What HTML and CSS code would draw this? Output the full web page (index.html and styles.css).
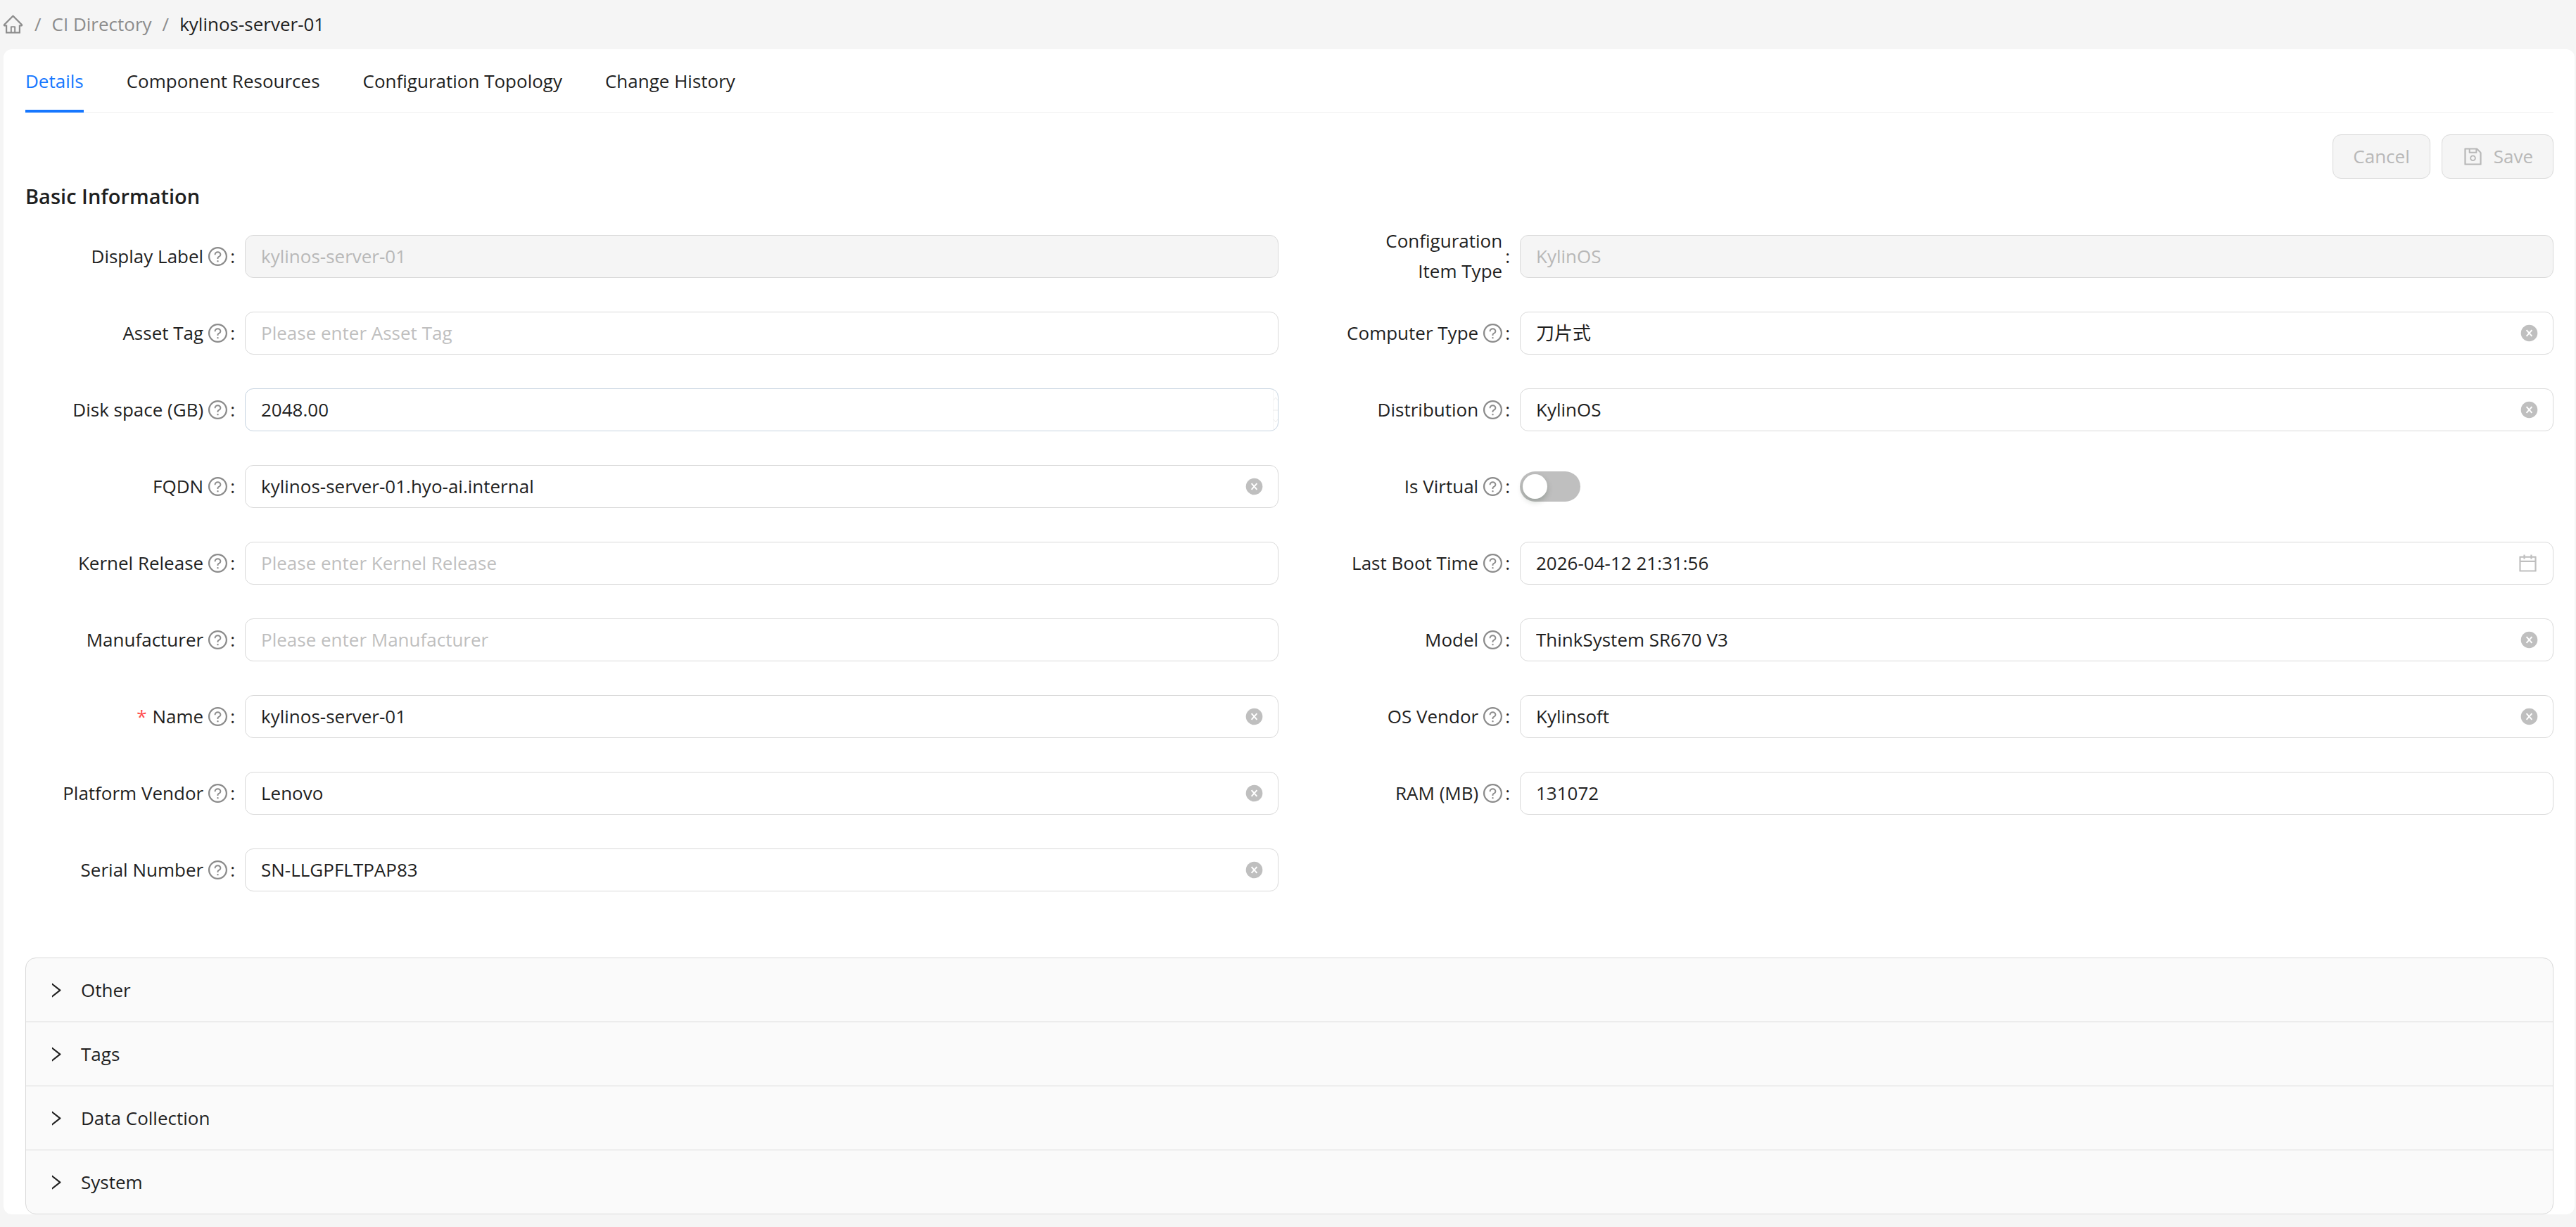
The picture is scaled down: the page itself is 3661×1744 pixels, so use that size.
FILE: index.html
```html
<!DOCTYPE html>
<html lang="en">
    <head>
        <meta charset="utf-8">
        <title>kylinos-server-01</title>
        <link rel="stylesheet" href="styles.css">
    </head>
    <body>
        <svg class="sprite" aria-hidden="true">
            <symbol id="i-home" viewBox="0 0 1024 1024"><path d="M946.5 505L560.1 118.8l-25.9-25.9a31.5 31.5 0 00-44.4 0L77.5 505a63.9 63.9 0 00-18.8 46c.4 35.2 29.7 63.3 64.9 63.3h42.5V940h691.8V614.3h43.4c17.1 0 33.2-6.7 45.3-18.8a63.6 63.6 0 0018.7-45.3c0-17-6.7-33.1-18.8-45.2zM568 868H456V664h112v204zm217.9-325.7V868H632V640c0-22.1-17.9-40-40-40H432c-22.1 0-40 17.9-40 40v228H238.1V542.3h-96l370-369.7 23.1 23.1L882 542.3h-96.1z"/></symbol>
            <symbol id="i-help" viewBox="0 0 1024 1024"><path d="M512 64C264.6 64 64 264.6 64 512s200.6 448 448 448 448-200.6 448-448S759.4 64 512 64zm0 820c-205.4 0-372-166.6-372-372s166.6-372 372-372 372 166.6 372 372-166.6 372-372 372z"/><path d="M623.6 316.7C593.6 290.4 554 276 512 276s-81.6 14.5-111.6 40.7C369.2 344 352 380.7 352 420v7.6c0 4.4 3.6 8 8 8h48c4.4 0 8-3.6 8-8V420c0-44.1 43.1-80 96-80s96 35.9 96 80c0 31.1-22 59.6-56.1 72.7-21.2 8.1-39.2 22.3-52.1 40.9-13.1 19-19.9 41.8-19.9 64.9V620c0 4.4 3.6 8 8 8h48c4.4 0 8-3.6 8-8v-22.7a48.3 48.3 0 0130.9-44.8c59-22.7 97.1-74.7 97.1-132.5.1-39.3-17.1-76-48.3-103.3zM472 732a40 40 0 1080 0 40 40 0 10-80 0z"/></symbol>
            <symbol id="i-right" viewBox="0 0 1024 1024"><path d="M765.7 486.8L314.9 134.7A7.97 7.97 0 00302 141v77.3c0 4.9 2.3 9.6 6.1 12.6l360 281.1-360 281.1c-3.9 3-6.1 7.7-6.1 12.6V883c0 6.7 7.7 10.4 12.9 6.3l450.8-352.1a31.96 31.96 0 000-50.4z"/></symbol>
            <symbol id="i-save" viewBox="0 0 1024 1024"><path d="M893.3 293.3L730.7 130.7c-7.5-7.5-16.7-13-26.7-16V112H144c-17.7 0-32 14.3-32 32v736c0 17.7 14.3 32 32 32h736c17.7 0 32-14.3 32-32V338.5c0-17-6.7-33.2-18.7-45.2zM384 184h256v104H384V184zm456 656H184V184h136v136c0 17.7 14.3 32 32 32h320c17.7 0 32-14.3 32-32V205.8l136 136V840zM512 442c-79.5 0-144 64.5-144 144s64.5 144 144 144 144-64.5 144-144-64.5-144-144-144zm0 224c-44.2 0-80-35.8-80-80s35.8-80 80-80 80 35.8 80 80-35.8 80-80 80z"/></symbol>
            <symbol id="i-calendar" viewBox="0 0 1024 1024"><path d="M880 184H712v-64c0-4.4-3.6-8-8-8h-56c-4.4 0-8 3.6-8 8v64H384v-64c0-4.4-3.6-8-8-8h-56c-4.4 0-8 3.6-8 8v64H144c-17.7 0-32 14.3-32 32v664c0 17.7 14.3 32 32 32h736c17.7 0 32-14.3 32-32V216c0-17.7-14.3-32-32-32zm-40 656H184V460h656v380zM184 392V256h128v48c0 4.4 3.6 8 8 8h56c4.4 0 8-3.6 8-8v-48h256v48c0 4.4 3.6 8 8 8h56c4.4 0 8-3.6 8-8v-48h128v136H184z"/></symbol>
            <symbol id="i-clear" viewBox="0 0 1024 1024"><circle cx="512" cy="512" r="448"/><path d="M365 345l294 334M659 345L365 679" fill="none" stroke="#fff" stroke-width="76"/></symbol>
        </svg>

        <nav class="breadcrumb" aria-label="Breadcrumb">
            <a href="#" aria-label="Home"><svg class="icon"><use href="#i-home"/></svg></a>
            <span class="sep">/</span>
            <a href="#">CI Directory</a>
            <span class="sep">/</span>
            <span class="current">kylinos-server-01</span>
        </nav>

        <main class="card">
            <nav class="tabs">
                <a href="#" class="tab active">Details</a>
                <a href="#" class="tab">Component Resources</a>
                <a href="#" class="tab">Configuration Topology</a>
                <a href="#" class="tab">Change History</a>
            </nav>

            <div class="actions">
                <button class="btn" type="button" disabled>Cancel</button>
                <button class="btn" type="button" disabled><svg class="icon"><use href="#i-save"/></svg>Save</button>
            </div>

            <h2>Basic Information</h2>

            <form class="form">
                <div class="item">
                    <label for="display_label">Display Label <svg class="icon help"><use href="#i-help"/></svg><span class="colon">:</span></label>
                    <div class="control disabled"><input id="display_label" type="text" value="kylinos-server-01" disabled></div>
                </div>
                <div class="item">
                    <label for="ci_type"><span>Configuration<br>Item Type</span><span class="colon">:</span></label>
                    <div class="control disabled"><input id="ci_type" type="text" value="KylinOS" disabled></div>
                </div>
                <div class="item">
                    <label for="asset_tag">Asset Tag <svg class="icon help"><use href="#i-help"/></svg><span class="colon">:</span></label>
                    <div class="control"><input id="asset_tag" type="text" placeholder="Please enter Asset Tag"></div>
                </div>
                <div class="item">
                    <label for="computer_type">Computer Type <svg class="icon help"><use href="#i-help"/></svg><span class="colon">:</span></label>
                    <div class="control"><input id="computer_type" type="text" value="刀片式"><button class="clear" type="button" aria-label="Clear"><svg><use href="#i-clear"/></svg></button></div>
                </div>
                <div class="item">
                    <label for="disk_space">Disk space (GB) <svg class="icon help"><use href="#i-help"/></svg><span class="colon">:</span></label>
                    <div class="control leaving">
                        <input id="disk_space" type="text" inputmode="decimal" value="2048.00">
                        <svg class="stepper" viewBox="0 0 7 59"><path d="M0 0v59M0 30h7M1 16l3-4 3 4M1 43l3 4 3-4"/></svg>
                    </div>
                </div>
                <div class="item">
                    <label for="distribution">Distribution <svg class="icon help"><use href="#i-help"/></svg><span class="colon">:</span></label>
                    <div class="control"><input id="distribution" type="text" value="KylinOS"><button class="clear" type="button" aria-label="Clear"><svg><use href="#i-clear"/></svg></button></div>
                </div>
                <div class="item">
                    <label for="fqdn">FQDN <svg class="icon help"><use href="#i-help"/></svg><span class="colon">:</span></label>
                    <div class="control"><input id="fqdn" type="text" value="kylinos-server-01.hyo-ai.internal"><button class="clear" type="button" aria-label="Clear"><svg><use href="#i-clear"/></svg></button></div>
                </div>
                <div class="item">
                    <label for="is_virtual">Is Virtual <svg class="icon help"><use href="#i-help"/></svg><span class="colon">:</span></label>
                    <input id="is_virtual" class="switch" type="checkbox" role="switch">
                </div>
                <div class="item">
                    <label for="kernel">Kernel Release <svg class="icon help"><use href="#i-help"/></svg><span class="colon">:</span></label>
                    <div class="control"><input id="kernel" type="text" placeholder="Please enter Kernel Release"></div>
                </div>
                <div class="item">
                    <label for="boot_time">Last Boot Time <svg class="icon help"><use href="#i-help"/></svg><span class="colon">:</span></label>
                    <div class="control"><input id="boot_time" type="text" value="2026-04-12 21:31:56"><svg class="icon suffix"><use href="#i-calendar"/></svg></div>
                </div>
                <div class="item">
                    <label for="manufacturer">Manufacturer <svg class="icon help"><use href="#i-help"/></svg><span class="colon">:</span></label>
                    <div class="control"><input id="manufacturer" type="text" placeholder="Please enter Manufacturer"></div>
                </div>
                <div class="item">
                    <label for="model">Model <svg class="icon help"><use href="#i-help"/></svg><span class="colon">:</span></label>
                    <div class="control"><input id="model" type="text" value="ThinkSystem SR670 V3"><button class="clear" type="button" aria-label="Clear"><svg><use href="#i-clear"/></svg></button></div>
                </div>
                <div class="item">
                    <label for="name"><span class="required">*</span>Name <svg class="icon help"><use href="#i-help"/></svg><span class="colon">:</span></label>
                    <div class="control"><input id="name" type="text" value="kylinos-server-01" required><button class="clear" type="button" aria-label="Clear"><svg><use href="#i-clear"/></svg></button></div>
                </div>
                <div class="item">
                    <label for="os_vendor">OS Vendor <svg class="icon help"><use href="#i-help"/></svg><span class="colon">:</span></label>
                    <div class="control"><input id="os_vendor" type="text" value="Kylinsoft"><button class="clear" type="button" aria-label="Clear"><svg><use href="#i-clear"/></svg></button></div>
                </div>
                <div class="item">
                    <label for="platform_vendor">Platform Vendor <svg class="icon help"><use href="#i-help"/></svg><span class="colon">:</span></label>
                    <div class="control"><input id="platform_vendor" type="text" value="Lenovo"><button class="clear" type="button" aria-label="Clear"><svg><use href="#i-clear"/></svg></button></div>
                </div>
                <div class="item">
                    <label for="ram">RAM (MB) <svg class="icon help"><use href="#i-help"/></svg><span class="colon">:</span></label>
                    <div class="control"><input id="ram" type="text" inputmode="numeric" value="131072"></div>
                </div>
                <div class="item">
                    <label for="serial">Serial Number <svg class="icon help"><use href="#i-help"/></svg><span class="colon">:</span></label>
                    <div class="control"><input id="serial" type="text" value="SN-LLGPFLTPAP83"><button class="clear" type="button" aria-label="Clear"><svg><use href="#i-clear"/></svg></button></div>
                </div>
            </form>

            <div class="collapse">
                <button type="button" aria-expanded="false"><svg><use href="#i-right"/></svg>Other</button>
                <button type="button" aria-expanded="false"><svg><use href="#i-right"/></svg>Tags</button>
                <button type="button" aria-expanded="false"><svg><use href="#i-right"/></svg>Data Collection</button>
                <button type="button" aria-expanded="false"><svg><use href="#i-right"/></svg>System</button>
            </div>
        </main>
    </body>
</html>
```
FILE: styles.css
```css
* {
    box-sizing: border-box;
    margin: 0;
    padding: 0;
}
body {
    padding: 0 2px 18px 5px;
    background: #f5f5f5;
    color: #1f1f1f;
    font: 26px/43px "Open Sans", "Noto Sans CJK SC", sans-serif;
}
button, input {
    font: inherit;
    color: inherit;
}
a {
    color: inherit;
    text-decoration: none;
}
svg {
    display: block;
    flex: none;
    width: 27px;
    height: 27px;
    fill: currentColor;
}
.sprite {
    display: none;
}
.icon {
    width: 31px;
    height: 31px;
}

.breadcrumb {
    display: flex;
    align-items: center;
    gap: 15px;
    height: 70px;
    margin-left: -2px;
    padding-bottom: 2px;
    color: #8c8c8c;
}
.breadcrumb .current {
    color: #1f1f1f;
}

.card {
    padding: 0 30px 0 31px;
    border-radius: 12px;
    background: #fff;
}
.tabs {
    display: flex;
    gap: 61px;
    border-bottom: 1px solid #f0f0f0;
}
.tab {
    margin-bottom: -1px;
    padding: 24px 0 19px;
    border-bottom: 4px solid transparent;
}
.tab.active {
    color: #1677ff;
    border-color: #1677ff;
}

.actions {
    display: flex;
    justify-content: flex-end;
    gap: 16px;
    padding-top: 31px;
}
.btn {
    display: flex;
    align-items: center;
    gap: 14px;
    height: 63px;
    padding: 0 28px;
    border: 1px solid #d9d9d9;
    border-radius: 12px;
    background: #f5f5f5;
    color: #b8b8b8;
}
h2 {
    padding-top: 1px;
    font-size: 29px;
    line-height: 48px;
    font-weight: 600;
}

.form {
    display: grid;
    grid-template-columns: 1fr 1fr;
    column-gap: 31px;
    row-gap: 47px;
    padding: 30px 0 94px;
}
.item {
    display: grid;
    grid-template-columns: 312px 1fr;
    grid-template-rows: 62px;
    align-items: center;
}
.item label {
    display: flex;
    align-items: center;
    justify-content: flex-end;
    padding-right: 14px;
    text-align: right;
}
.help {
    margin: 0 -2px 0 5px;
    color: #8c8c8c;
}
.colon {
    margin-left: 4px;
}
.required {
    margin-right: 8px;
    color: #ff4d4f;
}
.control {
    display: flex;
    align-items: center;
    height: 61px;
    padding: 0 20px 0 22px;
    border: 1px solid #d9d9d9;
    border-radius: 12px;
    background: #fff;
    overflow: hidden;
}
.control input {
    flex: 1;
    min-width: 0;
    border: 0;
    outline: none;
    background: none;
}
.control input::placeholder {
    color: #bfbfbf;
}
.control.disabled {
    background: #f5f5f5;
    color: #b8b8b8;
}
.control.leaving {
    padding-right: 0;
    border-color: #c6d3e0;
}
.stepper {
    width: 7px;
    height: 59px;
    fill: none;
    stroke: #ececec;
}
.clear {
    border: 0;
    background: none;
    color: #bfbfbf;
    cursor: pointer;
}
.suffix {
    color: #bfbfbf;
}
.switch {
    appearance: none;
    width: 86px;
    height: 43px;
    padding: 4px;
    border-radius: 22px;
    background: #bfbfbf;
}
.switch::before {
    content: "";
    display: block;
    width: 35px;
    height: 35px;
    border-radius: 50%;
    background: #fff;
    box-shadow: 0 4px 8px rgba(0, 35, 11, 0.2);
}

.collapse {
    border: 1px solid #d9d9d9;
    border-radius: 15px;
    background: #fafafa;
}
.collapse button {
    display: flex;
    align-items: center;
    gap: 22px;
    width: 100%;
    height: 91px;
    padding: 0 29px;
    border: 0;
    border-bottom: 1px solid #d9d9d9;
    background: none;
}
.collapse button:last-child {
    height: 90px;
    border-bottom: 0;
}
```
